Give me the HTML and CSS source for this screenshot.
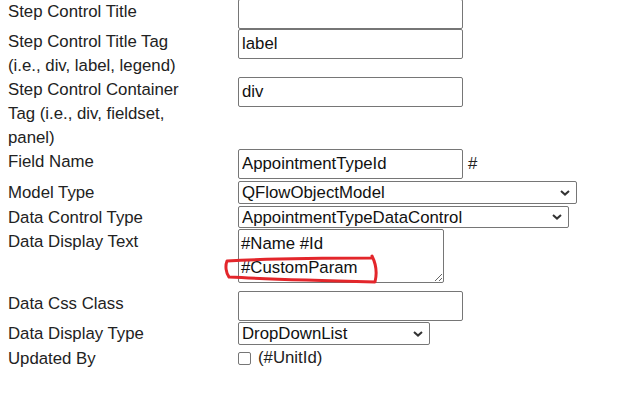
FILE: index.html
```html
<!DOCTYPE html>
<html>
<head>
  <title>Data Control Settings</title>
  <link rel="stylesheet" href="styles.css">
</head>
<body>
  <div class="settings">
    <div class="label">Step Control Title</div>
    <div class="field"><input type="text" class="text-input" value=""></div>

    <div class="label">Step Control Title Tag (i.e., div, label, legend)</div>
    <div class="field"><input type="text" class="text-input" value="label"></div>

    <div class="label">Step Control Container Tag (i.e., div, fieldset, panel)</div>
    <div class="field"><input type="text" class="text-input" value="div"></div>

    <div class="label">Field Name</div>
    <div class="field inline">
      <input type="text" class="text-input" value="AppointmentTypeId">
      <span>#</span>
    </div>

    <div class="label">Model Type</div>
    <div class="field">
      <div class="select-wrap wide">
        <select class="dropdown"><option>QFlowObjectModel</option></select>
        <svg class="chevron" width="10" height="6" viewBox="0 0 10 6"><path d="M1 1 L5 4.6 L9 1" fill="none" stroke="#333" stroke-width="2"/></svg>
      </div>
    </div>

    <div class="label">Data Control Type</div>
    <div class="field">
      <div class="select-wrap medium">
        <select class="dropdown short"><option>AppointmentTypeDataControl</option></select>
        <svg class="chevron" width="10" height="6" viewBox="0 0 10 6"><path d="M1 1 L5 4.6 L9 1" fill="none" stroke="#333" stroke-width="2"/></svg>
      </div>
    </div>

    <div class="label">Data Display Text</div>
    <div class="field annotated">
      <textarea class="text-area" rows="2">#Name #Id
#CustomParam</textarea>
      <svg class="scribble" width="170" height="45" viewBox="0 0 170 45">
        <path d="M153 9 C110 9, 45 10, 9 12 C7 17, 8 24, 11 28 C50 30, 120 32, 157 33 C159 25, 158 15, 154 7" fill="none" stroke="#e3262b" stroke-width="3" stroke-linecap="round" stroke-linejoin="round"/>
      </svg>
    </div>

    <div class="label">Data Css Class</div>
    <div class="field"><input type="text" class="text-input" value=""></div>

    <div class="label">Data Display Type</div>
    <div class="field">
      <div class="select-wrap small">
        <select class="dropdown"><option>DropDownList</option></select>
        <svg class="chevron" width="10" height="6" viewBox="0 0 10 6"><path d="M1 1 L5 4.6 L9 1" fill="none" stroke="#333" stroke-width="2"/></svg>
      </div>
    </div>

    <div class="label">Updated By</div>
    <div class="field check">
      <input type="checkbox" class="check-box">
      <span>(#UnitId)</span>
    </div>
  </div>
</body>
</html>
```

FILE: styles.css
```css
body {
  margin: 0;
  font-family: "Liberation Sans", Arial, sans-serif;
  font-size: 16.8px;
  color: #222;
  background: #fff;
}
.settings {
  display: grid;
  grid-template-columns: 230px auto;
  margin-top: -1px;
  padding: 0 8px;
}
.label {
  line-height: 24px;
  padding-top: 1px;
  margin-bottom: -1px;
  padding-right: 35px;
}
.field {
  min-width: 0;
}
.field.inline {
  display: flex;
  align-items: center;
  gap: 5px;
  height: 30px;
  padding-bottom: 1px;
}
.text-input {
  display: block;
  box-sizing: border-box;
  width: 225px;
  height: 30px;
  padding: 0 3px;
  border: 1px solid #767676;
  border-radius: 2px;
  font-family: inherit;
  font-size: 16.8px;
  color: #111;
}
.select-wrap {
  position: relative;
  margin: 1px 0;
}
.select-wrap.wide { width: 339px; }
.select-wrap.medium { width: 331px; }
.select-wrap.small { width: 192px; }
.dropdown {
  display: block;
  box-sizing: border-box;
  width: 100%;
  height: 23px;
  padding: 0 24px 0 3px;
  border: 1px solid #767676;
  border-radius: 2px;
  background: #fff;
  font-family: inherit;
  font-size: 16.8px;
  color: #111;
  appearance: none;
  -webkit-appearance: none;
}
.dropdown.short {
  height: 22px;
}
.chevron {
  position: absolute;
  right: 7px;
  top: 50%;
  margin-top: -3px;
  pointer-events: none;
}
.annotated {
  position: relative;
}
.text-area {
  display: block;
  box-sizing: border-box;
  width: 206px;
  height: 54px;
  margin-bottom: 8px;
  padding: 2px 2px;
  border: 1px solid #767676;
  border-radius: 2px;
  font-family: inherit;
  font-size: 16.8px;
  line-height: 24px;
  color: #111;
  resize: both;
}
.scribble {
  position: absolute;
  left: -20px;
  top: 20px;
  pointer-events: none;
}
.field.check {
  display: flex;
  align-items: center;
  height: 24px;
  line-height: 24px;
}
.check-box {
  appearance: none;
  -webkit-appearance: none;
  box-sizing: border-box;
  width: 13px;
  height: 13px;
  margin: 1px 7px 0 0;
  border: 1px solid #767676;
  border-radius: 2px;
  background: #fff;
}
```
